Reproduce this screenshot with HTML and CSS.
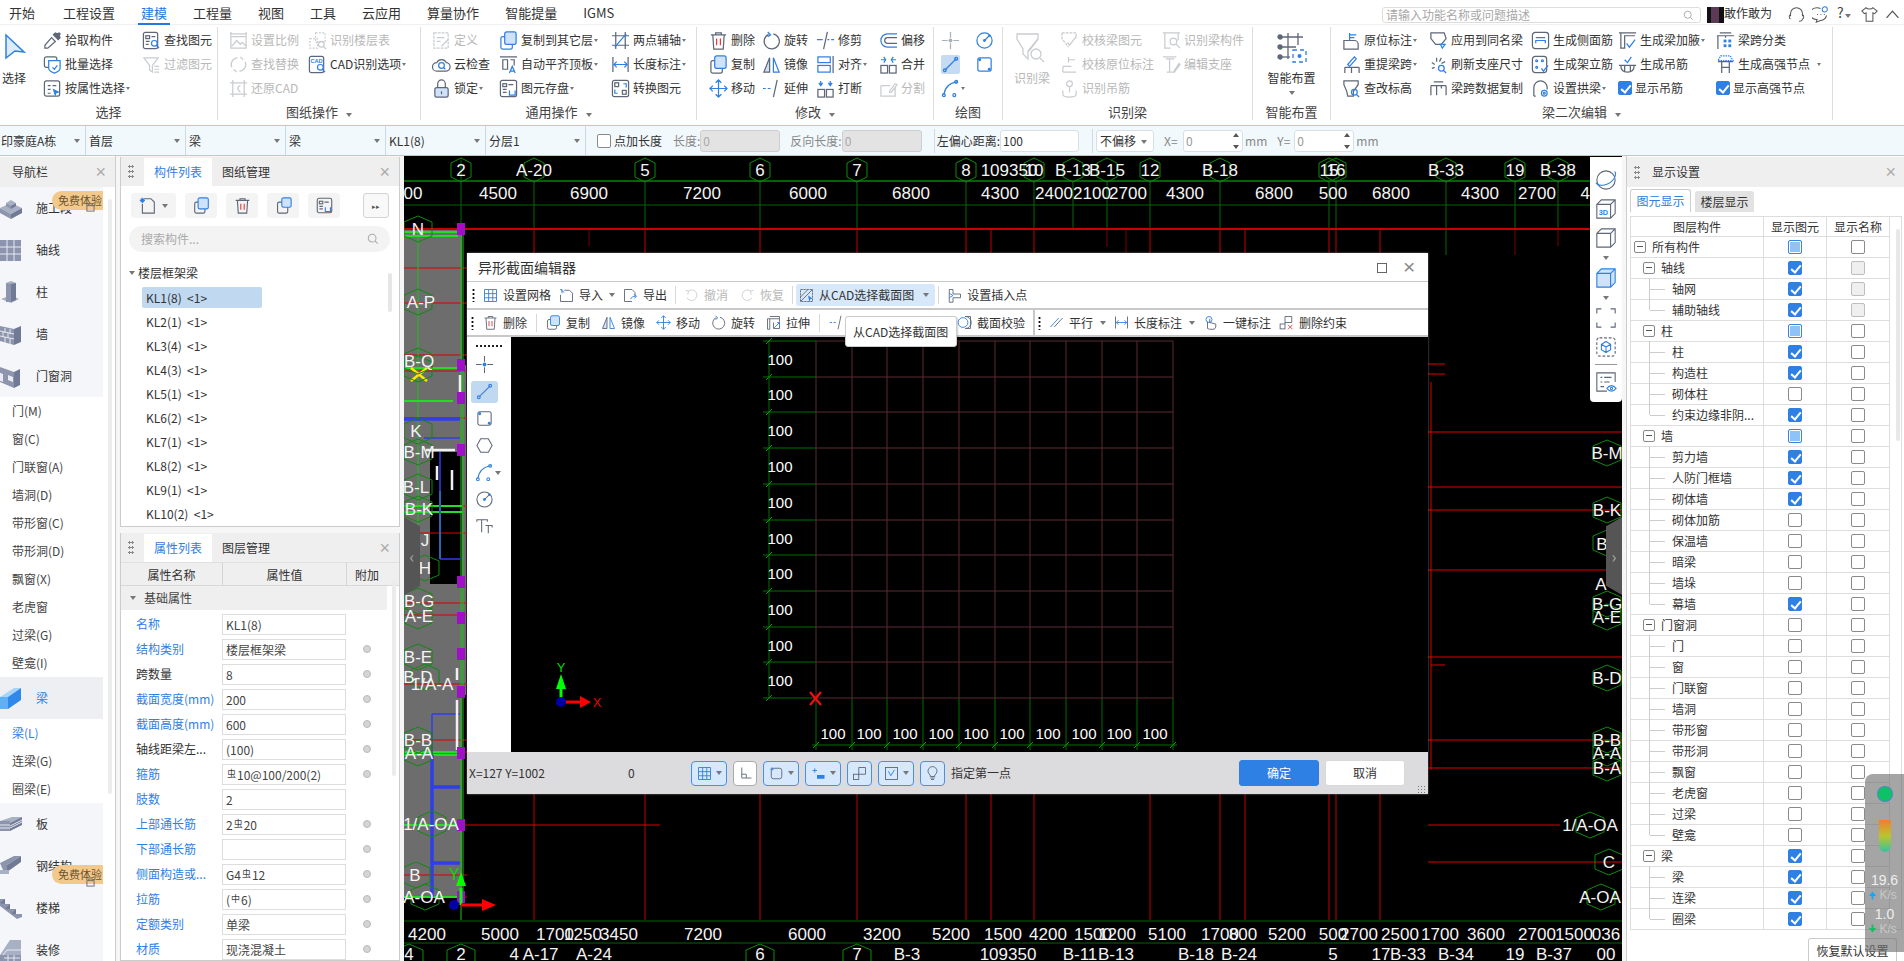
FILE: index.html
```html
<!DOCTYPE html>
<html lang="zh-CN">
<head>
<meta charset="utf-8">
<title>异形截面编辑器</title>
<link rel="stylesheet" href="styles.css">
</head>
<body>
<svg class="sprite" aria-hidden="true">
<symbol id="pick" viewBox="0 0 20 20"><path d="M9 7l4 4-8 7H2v-3z"/><path class="k" d="M11 4l2-2 2 1 2-1 1 1-1 2 1 2-2 2-5-5z"/></symbol>
<symbol id="batch" viewBox="0 0 20 20"><rect x="1.500" y="2" width="13" height="11" rx="2"/><path class="b w" d="M6 6h12v8c0 2-3 4-6 5-3-1-6-3-6-5z"/><path class="b" d="M10 13l2 2 3-4"/></symbol>
<symbol id="attr" viewBox="0 0 20 20"><rect x="1.500" y="2" width="16" height="16" rx="2"/><path d="M5 7h3M10 7h4M5 11h3M5 15h3"/><path class="fb" d="M10 10l8 4-4 1-1 4z"/></symbol>
<symbol id="find" viewBox="0 0 20 20"><rect x="1.500" y="1.500" width="15" height="17" rx="2"/><rect x="4" y="5" width="4" height="3"/><path d="M10 6h4M4 11h4M4 14h3"/><circle class="b w" cx="13" cy="13" r="3"/><path class="b" d="M15 15l3 3"/></symbol>
<symbol id="filter" viewBox="0 0 20 20"><path d="M2 3h15l-6 8v7l-3-2v-5z"/><path d="M13 12h5M13 15h5M13 18h5"/></symbol>
<symbol id="scale" viewBox="0 0 20 20"><path d="M2 1v4M18 1v4M1 3h18M2 6h16v12H2z"/><path d="M3 16l5-6 4 4 2-2 4 4"/></symbol>
<symbol id="idfl" viewBox="0 0 20 20"><path stroke-dasharray="2 1.500" d="M2 8h8v10H2zM8 2h10v10H8z"/><circle cx="14" cy="14" r="3"/><path d="M16 16l3 3"/></symbol>
<symbol id="repl" viewBox="0 0 20 20"><path d="M3 13A7 7 0 0 1 9 3M12 2l3 3M17 7a7 7 0 0 1-6 10M8 18l-3-3"/></symbol>
<symbol id="rest" viewBox="0 0 20 20"><path d="M4 1v18M16 1v18M1 4h18M1 16h18"/><path d="M12 7a4 4 0 0 0-3 3l3 4"/></symbol>
<symbol id="defi" viewBox="0 0 20 20"><path stroke-dasharray="3 1" d="M2 2h15v16H2z"/><path d="M5 7h8M5 11h4M10 16l7-7"/></symbol>
<symbol id="cloud" viewBox="0 0 20 20"><path d="M5 17h9a4.500 4.500 0 0 0 1-9 5.500 5.500 0 0 0-10 0 4.500 4.500 0 0 0 0 9z"/><circle class="b" cx="10" cy="11" r="3"/><path class="b" d="M12 13l2 2"/></symbol>
<symbol id="lock" viewBox="0 0 20 20"><path d="M6 9V5a4 4 0 0 1 8 0v4"/><rect class="t" x="3" y="9" width="14" height="10" rx="2"/><path class="k" d="M10 13v3"/></symbol>
<symbol id="cpl" viewBox="0 0 20 20"><rect class="b" x="2" y="6" width="12" height="13" rx="2"/><rect class="t2" x="6" y="1" width="12" height="13" rx="2"/></symbol>
<symbol id="atop" viewBox="0 0 20 20"><path d="M1 2h18M4 5h5v10H4z"/><path d="M12 5h4v6"/><path class="b" d="M11 19l3-7 3 7M12 17h4"/></symbol>
<symbol id="save" viewBox="0 0 20 20"><rect x="1.500" y="1.500" width="17" height="17" rx="2"/><rect x="4" y="5" width="4" height="3"/><path d="M10 6h5M4 11h4M4 14h4"/><path class="b" d="M11 12v5h6v-5"/></symbol>
<symbol id="twop" viewBox="0 0 20 20"><path d="M5 1v18M15 1v18M1 5h18M1 15h18"/><path class="b" d="M4 17L16 3"/></symbol>
<symbol id="lenm" viewBox="0 0 20 20"><path d="M2 2v16M18 2v16"/><path class="b" d="M3 10h14M6 7l-3 3 3 3M14 7l3 3-3 3"/></symbol>
<symbol id="conv" viewBox="0 0 20 20"><rect x="1.500" y="1.500" width="17" height="17" rx="2"/><rect x="4" y="4" width="4" height="4"/><rect x="12" y="12" width="4" height="4"/><path class="b" d="M16 9V5h-3M4 11v4h3"/></symbol>
<symbol id="del" viewBox="0 0 20 20"><path d="M2 4h16M7 4V2h6v2M4 4l1 15h10l1-15"/><path class="r" d="M8 8v7M12 8v7"/></symbol>
<symbol id="copy" viewBox="0 0 20 20"><rect x="2" y="6" width="12" height="13" rx="2"/><rect class="t2" x="6" y="1" width="12" height="13" rx="2"/></symbol>
<symbol id="mirr" viewBox="0 0 20 20"><path class="t" d="M8 3v15H2z"/><path class="b" d="M12 3v15h6z"/></symbol>
<symbol id="move" viewBox="0 0 20 20"><path class="b" d="M10 1v18M1 10h18M7 4l3-3 3 3M7 16l3 3 3-3M4 7l-3 3 3 3M16 7l3 3-3 3"/></symbol>
<symbol id="rota" viewBox="0 0 20 20"><path d="M12 3a8 8 0 1 1-5 .5"/><path class="b" d="M6 1l3 3-3 2"/></symbol>
<symbol id="trim" viewBox="0 0 20 20"><path d="M12 1L8 19"/><path class="b" d="M1 9h6M12 9h2M16 9h3"/></symbol>
<symbol id="exte" viewBox="0 0 20 20"><path d="M16 1l-4 18"/><path class="b" d="M1 10h3M6 10h3"/></symbol>
<symbol id="alig" viewBox="0 0 20 20"><rect class="b" x="2" y="2" width="13" height="6"/><rect class="b" x="2" y="11" width="13" height="7"/><path d="M18 1v18"/></symbol>
<symbol id="brea" viewBox="0 0 20 20"><rect x="2" y="11" width="7" height="8"/><rect x="11" y="11" width="7" height="8"/><path class="b" d="M5 2v5M3 4l2 3 2-3M15 2v5M13 4l2 3 2-3"/></symbol>
<symbol id="offs" viewBox="0 0 20 20"><path class="b" d="M19 3H9a7 7 0 0 0 0 14h10"/><path d="M19 7H9a3 3 0 0 0 0 6h10"/></symbol>
<symbol id="merg" viewBox="0 0 20 20"><rect x="2" y="11" width="7" height="8"/><rect x="11" y="11" width="7" height="8"/><path class="b" d="M2 5h5M5 2l2 3-2 3M18 5h-5M15 2l-2 3 2 3"/></symbol>
<symbol id="spli" viewBox="0 0 20 20"><path d="M2 7h10M2 7v11h15V9M11 13l6-8 2 1-6 8h-2z"/></symbol>
<symbol id="pnt" viewBox="0 0 20 20"><path d="M10 1v6M10 13v6M1 10h6M13 10h6"/><circle class="fb" cx="10" cy="10" r="2"/></symbol>
<symbol id="cir" viewBox="0 0 20 20"><circle cx="10" cy="10" r="8"/><path d="M10 10l5-5"/><circle class="fb" cx="10" cy="10" r="1.500"/><circle class="fb" cx="15" cy="5" r="1.200"/></symbol>
<symbol id="lin" viewBox="0 0 20 20"><path d="M4 16L16 4"/><circle class="b" cx="4" cy="16" r="1.500"/><circle class="b" cx="16" cy="4" r="1.500"/></symbol>
<symbol id="rec" viewBox="0 0 20 20"><rect x="3" y="3" width="14" height="14" rx="2"/><circle class="fb" cx="15" cy="15" r="1.500"/><circle class="fb" cx="5" cy="5" r="1.500"/></symbol>
<symbol id="arc" viewBox="0 0 20 20"><path d="M3 17C4 8 9 4 17 3"/><circle class="b" cx="3" cy="17" r="1.500"/><circle class="b" cx="16" cy="3" r="1.500"/><circle class="b" cx="14" cy="17" r="1.500"/></symbol>
<symbol id="hexa" viewBox="0 0 20 20"><path d="M6 3h8l4 7-4 7H6l-4-7z"/></symbol>
<symbol id="typ" viewBox="0 0 20 20"><path d="M2 5V3h11v2M7 3v13M11 9h7v2M14 9v8"/></symbol>
<symbol id="idb" viewBox="0 0 30 32"><path d="M2 3h21v5L13 20v8l-5-5v-5L2 8z"/><path d="M23 8l-9 12"/><circle cx="21" cy="23" r="5"/><path d="M25 27l4 4"/></symbol>
<symbol id="chk" viewBox="0 0 20 20"><path stroke-dasharray="3 1" d="M2 2h15v6M2 2v6l7 9"/><path d="M8 12l2 3 7-9"/></symbol>
<symbol id="chk2" viewBox="0 0 20 20"><path d="M9 2v6M9 5h7M3 18h14M3 12h9M3 12v6"/></symbol>
<symbol id="idh" viewBox="0 0 20 20"><circle cx="10" cy="5" r="3"/><path d="M10 8v6M3 12v4a7 3 0 0 0 14 0v-4"/></symbol>
<symbol id="idc" viewBox="0 0 20 20"><path d="M1 2h18M3 2v16h6M17 2v8"/><circle cx="12" cy="11" r="3.500"/><path d="M15 14l4 4"/></symbol>
<symbol id="edsup" viewBox="0 0 20 20"><path d="M1 2h14M4 4h9M8 4v14M5 18h6M12 18l6-9 1 1-6 8z"/></symbol>
<symbol id="smart" viewBox="0 0 32 32"><path d="M4 6h23M4 16h16M12 2v26M22 2v12"/><circle class="k" cx="4" cy="6" r="2"/><circle class="k" cx="4" cy="16" r="2"/><circle class="k" cx="4" cy="26" r="2"/><path d="M4 26h10"/><path class="b" stroke-dasharray="4 3" d="M17 19h13v12H17z"/><circle class="fb" cx="23.500" cy="25" r="2"/></symbol>
<symbol id="bor" viewBox="0 0 20 20"><path d="M2 10h11a4 4 0 0 1 4 4v5H2z"/><path class="b" d="M8 2v8M8 4h7M8 7h5"/></symbol>
<symbol id="brp" viewBox="0 0 20 20"><path d="M3 13h15M3 13v6M10 13v6M18 13v6"/><path class="b" d="M6 10l7-8 2 2-7 8z"/></symbol>
<symbol id="bel" viewBox="0 0 20 20"><path d="M2 2h15v4l-5 7v5H6l-1-5-3-7z"/><circle class="b" cx="13" cy="14" r="3"/><path class="b" d="M15 16l3 3"/></symbol>
<symbol id="bap" viewBox="0 0 20 20"><path d="M2 2h14l2 6-5 6H7L2 8z"/><path class="b" d="M12 14l2 4 3-4z"/></symbol>
<symbol id="bref" viewBox="0 0 20 20"><path d="M8 3v4M3 8l3 2M3 14l3-1M13 3l-2 4M17 7l-4 2"/><circle class="b" cx="13" cy="14" r="3"/><path class="b" d="M15 16l3 3"/></symbol>
<symbol id="bcop" viewBox="0 0 20 20"><path d="M5 3h10M2 7h16M2 7v10M18 7v10M8 7v10M13 7v3"/></symbol>
<symbol id="bsid" viewBox="0 0 20 20"><rect x="1.500" y="1.500" width="17" height="17" rx="3"/><path class="b" d="M5 7h10M5 13v-3h10v3"/></symbol>
<symbol id="beri" viewBox="0 0 20 20"><rect x="1.500" y="1.500" width="15" height="17" rx="3"/><circle class="b" cx="6" cy="6" r="1"/><circle class="b" cx="12" cy="6" r="1"/><circle class="b" cx="6" cy="13" r="1"/><path class="b" d="M11 14l2 3 5-6"/></symbol>
<symbol id="barc" viewBox="0 0 20 20"><path d="M3 18V9a7 7 0 0 1 14 0v2M3 18h2"/><circle class="b" cx="14" cy="15" r="3"/><circle class="b" cx="14" cy="15" r="1"/></symbol>
<symbol id="bhau" viewBox="0 0 20 20"><path d="M1 2h18M3 2v16h4V5h11"/><path class="b" d="M9 13l3 4 6-8"/></symbol>
<symbol id="bhan" viewBox="0 0 20 20"><path d="M1 11h18M3 11c0 5 3 7 7 7s7-2 7-7M7 11v6M13 11v6"/><path class="b" d="M7 5l3 3 4-6"/></symbol>
<symbol id="bcla" viewBox="0 0 20 20"><path d="M4 2h12M1 5h18M2 5v14M10 5v2"/><rect class="fb" x="8" y="9" width="3" height="3"/><rect class="fb" x="13" y="9" width="3" height="3"/><rect class="fb" x="8" y="14" width="3" height="3"/><rect class="fb" x="13" y="14" width="3" height="3"/></symbol>
<symbol id="bhs" viewBox="0 0 20 20"><path class="b" stroke-dasharray="1.500 1" d="M5 1h10l3 5H2z"/><path d="M2 7h16M6 7v12M14 7v12M6 13h8"/></symbol>
<symbol id="grid" viewBox="0 0 20 20"><path class="b" d="M2 2h16v16H2zM2 7.500h16M2 13h16M7.500 2v16M13 2v16"/></symbol>
<symbol id="impo" viewBox="0 0 20 20"><path d="M7 3h7l4 4v11H2V9"/><path class="b" d="M2 2l5 4M4 7V2H2"/></symbol>
<symbol id="expo" viewBox="0 0 20 20"><path d="M12 18H2V2h10l4 4v5"/><path class="b" d="M10 15c1-3 4-4 7-4M15 8l3 3-3 3"/></symbol>
<symbol id="undo" viewBox="0 0 20 20"><path d="M6 4a7 7 0 1 1-2 9M2 3l4 1-1 5"/></symbol>
<symbol id="redo" viewBox="0 0 20 20"><path d="M14 4a7 7 0 1 0 2 9M18 3l-4 1 1 5"/></symbol>
<symbol id="fcad" viewBox="0 0 20 20"><path stroke-dasharray="3 1" d="M2 2h16v16H2z"/><path d="M2 12L12 2M2 18L18 2"/><path class="fb" d="M12 10l6 4-3 1-1 4z"/></symbol>
<symbol id="ins" viewBox="0 0 20 20"><path d="M3 2h5v6h10v5H8v6H3z"/><path class="b" d="M3 7l5 3-5 3"/></symbol>
<symbol id="stre" viewBox="0 0 20 20"><path d="M2 5h3v14H2zM5 5h13v4M5 2h13v3"/><path d="M10 10v8h8v-8"/><path class="b" d="M11 17l7-7M15 10h3v3"/></symbol>
<symbol id="veri" viewBox="0 0 20 20"><circle class="b" cx="8" cy="10" r="6.500"/><path d="M11 2h7v16h-7a8 8 0 0 0 0-16z"/></symbol>
<symbol id="para" viewBox="0 0 20 20"><path class="b" d="M2 16L13 4"/><path d="M7 16L18 4"/></symbol>
<symbol id="onek" viewBox="0 0 20 20"><circle class="b" cx="8" cy="6" r="4"/><path d="M6 9v9l3 1h6l2-3v-4l-8-2V5"/></symbol>
<symbol id="dcon" viewBox="0 0 20 20"><rect x="1.500" y="12" width="6.500" height="6.500"/><path d="M8 12V2h9v8h-9"/><path class="r" d="M12 13l6 6M18 13l-6 6"/></symbol>
<symbol id="orth" viewBox="0 0 20 20"><path d="M5 2v14h13M5 11h6v5"/></symbol>
<symbol id="blb" viewBox="0 0 20 20"><path d="M7 14v-2a6 6 0 1 1 6 0v2zM7 16h6M8 18h4"/></symbol>
<symbol id="snap" viewBox="0 0 20 20"><rect x="3" y="3" width="14" height="14" rx="3"/><circle class="b" cx="4" cy="4" r="1.500"/></symbol>
<symbol id="sn2" viewBox="0 0 20 20"><path class="b" d="M5 3v6M2 6h6"/><rect class="fb" x="8" y="12" width="10" height="5"/></symbol>
<symbol id="sn3" viewBox="0 0 20 20"><rect x="2" y="11" width="7" height="7"/><path d="M9 11V2h9v9H9"/></symbol>
<symbol id="sn4" viewBox="0 0 20 20"><rect x="2" y="2" width="16" height="16"/><path class="b" d="M6 7l3 6 5-8"/></symbol>
<symbol id="orb" viewBox="0 0 24 24"><circle cx="12" cy="12" r="10"/><path class="b" d="M1 15c3 5 15 3 20-5 2-4 2-7 0-7"/></symbol>
<symbol id="cube" viewBox="0 0 24 24"><path d="M2 7l5-5h15v15l-5 5H2zM2 7h15v15M17 7l5-5"/></symbol>
<symbol id="cubb" viewBox="0 0 24 24"><path class="t3" d="M2 7l5-5h15v15l-5 5H2zM2 7h15v15M17 7l5-5"/></symbol>
<symbol id="dash" viewBox="0 0 24 24"><path d="M2 7V2h5M17 2h5v5M22 17v5h-5M7 22H2v-5"/></symbol>
<symbol id="dcb" viewBox="0 0 24 24"><rect x="2" y="2" width="20" height="20" rx="3" stroke-dasharray="3 2"/><path class="b" d="M12 6l5 3v6l-5 3-5-3V9zM7 9l5 3 5-3M12 12v6"/></symbol>
<symbol id="leye" viewBox="0 0 24 24"><path d="M22 12V2H2v20h11M6 7h2M10 7h8M6 12h2M10 12h6M6 17h4"/><path class="b" d="M13 19c3-4 7-4 10 0-3 4-7 4-10 0z"/><circle class="b" cx="18" cy="19" r="1.200"/></symbol>
<symbol id="grp" viewBox="0 0 20 20"><rect x="3" y="6" width="12" height="13" rx="2"/><rect class="t2" x="8" y="1" width="11" height="11" rx="2"/></symbol>
<symbol id="plus" viewBox="0 0 20 20"><path d="M6 2h8l4 4v13H4V8"/><path class="b" d="M2 2l4 4M6 2L2 6M4 1v6M1 4h6"/></symbol>
</svg>

<header class="tabs">
  <span class="tab first">开始</span><span class="tab">工程设置</span><span class="tab on">建模</span><span class="tab">工程量</span><span class="tab">视图</span><span class="tab">工具</span><span class="tab">云应用</span><span class="tab">算量协作</span><span class="tab">智能提量</span><span class="tab">IGMS</span>
  <div class="search">请输入功能名称或问题描述<svg class="sic" viewBox="0 0 14 14"><circle cx="6" cy="6" r="4.500"/><path d="M9.500 9.500l3 3"/></svg></div>
  <span class="avatar"></span><span class="user">敢作敢为</span>
  <svg class="top-ic" viewBox="0 0 20 20"><path d="M3 12V9a7 7 0 0 1 14 0v3M3 10c-2 0-2 5 0 5M17 10c2 0 2 5 0 5M17 15c0 2-2 3-4 3"/></svg>
  <svg class="top-ic" viewBox="0 0 20 20"><path d="M10 3a8 7 0 1 0-4 13l-1 3 5-2a8 7 0 0 0 7-6"/><circle cx="15" cy="4" r="3" class="bl"/><path d="M6 10h1M10 10h1M14 10h1"/></svg>
  <span class="help">?<i class="dd"></i></span>
  <svg class="top-ic" viewBox="0 0 20 20"><path d="M6 2L1 6l3 3 2-1v10h8V8l2 1 3-3-5-4c-1 2-7 2-8 0z"/></svg>
  <svg class="top-ic up" viewBox="0 0 20 20"><path d="M3 14l7-8 7 8"/></svg>
</header>

<section class="ribbon">
  <div class="group g1">
    <div class="gbody">
      <div class="big sel"><svg class="bigic" viewBox="0 0 22 27"><path d="M2 2l18 17-9-1-9 7z"/></svg><span>选择</span></div>
      <div class="ri"><svg class="ic"><use href="#pick"/></svg>拾取构件</div>
      <div class="ri"><svg class="ic"><use href="#batch"/></svg>批量选择</div>
      <div class="ri"><svg class="ic"><use href="#attr"/></svg>按属性选择<i class="dd"></i></div>
      <div class="ri"><svg class="ic"><use href="#find"/></svg>查找图元</div>
      <div class="ri off"><svg class="ic"><use href="#filter"/></svg>过滤图元</div>
    </div>
    <div class="gt">选择</div>
  </div>
  <div class="group g2">
    <div class="gbody">
      <div class="ri off"><svg class="ic"><use href="#scale"/></svg>设置比例</div>
      <div class="ri off"><svg class="ic"><use href="#repl"/></svg>查找替换</div>
      <div class="ri off"><svg class="ic"><use href="#rest"/></svg>还原CAD</div>
      <div class="ri off"><svg class="ic"><use href="#idfl"/></svg>识别楼层表</div>
      <div class="ri"><svg class="ic" viewBox="0 0 20 20"><rect x="1.500" y="1.500" width="15" height="17" rx="2"/><text class="ct" x="2.500" y="8">CAD</text><circle class="b w" cx="13" cy="13" r="3"/><path class="b" d="M15 15l3 3"/></svg>CAD识别选项<i class="dd"></i></div>
    </div>
    <div class="gt">图纸操作<i class="dd wide"></i></div>
  </div>
  <div class="group g3">
    <div class="gbody">
      <div class="ri off"><svg class="ic"><use href="#defi"/></svg>定义</div>
      <div class="ri"><svg class="ic"><use href="#cloud"/></svg>云检查</div>
      <div class="ri"><svg class="ic"><use href="#lock"/></svg>锁定<i class="dd"></i></div>
      <div class="ri"><svg class="ic"><use href="#cpl"/></svg>复制到其它层<i class="dd"></i></div>
      <div class="ri"><svg class="ic"><use href="#atop"/></svg>自动平齐顶板<i class="dd"></i></div>
      <div class="ri"><svg class="ic"><use href="#save"/></svg>图元存盘<i class="dd"></i></div>
      <div class="ri"><svg class="ic"><use href="#twop"/></svg>两点辅轴<i class="dd"></i></div>
      <div class="ri"><svg class="ic"><use href="#lenm"/></svg>长度标注<i class="dd"></i></div>
      <div class="ri"><svg class="ic"><use href="#conv"/></svg>转换图元</div>
    </div>
    <div class="gt">通用操作<i class="dd wide"></i></div>
  </div>
  <div class="group g4">
    <div class="gbody">
      <div class="ri"><svg class="ic"><use href="#del"/></svg>删除</div>
      <div class="ri"><svg class="ic"><use href="#copy"/></svg>复制</div>
      <div class="ri"><svg class="ic"><use href="#move"/></svg>移动</div>
      <div class="ri"><svg class="ic"><use href="#rota"/></svg>旋转</div>
      <div class="ri"><svg class="ic"><use href="#mirr"/></svg>镜像</div>
      <div class="ri"><svg class="ic"><use href="#exte"/></svg>延伸</div>
      <div class="ri"><svg class="ic"><use href="#trim"/></svg>修剪</div>
      <div class="ri"><svg class="ic"><use href="#alig"/></svg>对齐<i class="dd"></i></div>
      <div class="ri"><svg class="ic"><use href="#brea"/></svg>打断</div>
      <div class="ri"><svg class="ic"><use href="#offs"/></svg>偏移</div>
      <div class="ri"><svg class="ic"><use href="#merg"/></svg>合并</div>
      <div class="ri off"><svg class="ic"><use href="#spli"/></svg>分割</div>
    </div>
    <div class="gt">修改<i class="dd wide"></i></div>
  </div>
  <div class="group g5">
    <div class="gbody">
      <div class="ri off2"><svg class="ic"><use href="#pnt"/></svg></div>
      <div class="ri act"><svg class="ic"><use href="#lin"/></svg></div>
      <div class="ri"><svg class="ic"><use href="#arc"/></svg><i class="dd"></i></div>
      <div class="ri"><svg class="ic"><use href="#cir"/></svg></div>
      <div class="ri"><svg class="ic"><use href="#rec"/></svg></div>
    </div>
    <div class="gt">绘图</div>
  </div>
  <div class="group g6">
    <div class="gbody">
      <div class="big off"><svg class="bigic2"><use href="#idb"/></svg><span>识别梁</span></div>
      <div class="ri off"><svg class="ic"><use href="#chk"/></svg>校核梁图元</div>
      <div class="ri off"><svg class="ic"><use href="#chk2"/></svg>校核原位标注</div>
      <div class="ri off"><svg class="ic"><use href="#idh"/></svg>识别吊筋</div>
      <div class="ri off"><svg class="ic"><use href="#idc"/></svg>识别梁构件</div>
      <div class="ri off"><svg class="ic"><use href="#edsup"/></svg>编辑支座</div>
    </div>
    <div class="gt">识别梁</div>
  </div>
  <div class="group g7">
    <div class="gbody">
      <div class="big"><svg class="bigic2"><use href="#smart"/></svg><span>智能布置</span><i class="dd"></i></div>
    </div>
    <div class="gt">智能布置</div>
  </div>
  <div class="group g8">
    <div class="gbody">
      <div class="ri"><svg class="ic"><use href="#bor"/></svg>原位标注<i class="dd"></i></div>
      <div class="ri"><svg class="ic"><use href="#brp"/></svg>重提梁跨<i class="dd"></i></div>
      <div class="ri"><svg class="ic"><use href="#bel"/></svg>查改标高</div>
      <div class="ri"><svg class="ic"><use href="#bap"/></svg>应用到同名梁</div>
      <div class="ri"><svg class="ic"><use href="#bref"/></svg>刷新支座尺寸</div>
      <div class="ri"><svg class="ic"><use href="#bcop"/></svg>梁跨数据复制</div>
      <div class="ri"><svg class="ic"><use href="#bsid"/></svg>生成侧面筋</div>
      <div class="ri"><svg class="ic"><use href="#beri"/></svg>生成架立筋</div>
      <div class="ri"><svg class="ic"><use href="#barc"/></svg>设置拱梁<i class="dd"></i></div>
      <div class="ri"><svg class="ic"><use href="#bhau"/></svg>生成梁加腋<i class="dd"></i></div>
      <div class="ri"><svg class="ic"><use href="#bhan"/></svg>生成吊筋</div>
      <div class="ri"><span class="cb on"></span>显示吊筋</div>
      <div class="ri"><svg class="ic"><use href="#bcla"/></svg>梁跨分类</div>
      <div class="ri"><svg class="ic"><use href="#bhs"/></svg>生成高强节点<i class="dd wide"></i></div>
      <div class="ri"><span class="cb on"></span>显示高强节点</div>
    </div>
    <div class="gt">梁二次编辑<i class="dd wide"></i></div>
  </div>
  <div class="group g9"></div>
</section>

<section class="opts">
  <div class="cell c0">印豪庭A栋<i class="dd"></i></div>
  <div class="cell">首层<i class="dd"></i></div>
  <div class="cell">梁<i class="dd"></i></div>
  <div class="cell">梁<i class="dd"></i></div>
  <div class="cell">KL1(8)<i class="dd"></i></div>
  <div class="cell">分层1<i class="dd"></i></div>
  <label class="op chk"><span class="cb"></span>点加长度</label>
  <span class="op o1 dim">长度:</span><span class="inp dis">0</span>
  <span class="op o2 dim">反向长度:</span><span class="inp dis">0</span>
  <span class="vsep s1"></span>
  <span class="op">左偏心距离:</span><span class="inp w79">100</span>
  <span class="vsep s2"></span>
  <span class="inp sel-b">不偏移<i class="dd"></i></span>
  <span class="op o3 dim">X=</span><span class="inp spin dimv">0<i class="sp"></i></span><span class="op o4 dim">mm</span>
  <span class="op o5 dim">Y=</span><span class="inp spin dimv">0<i class="sp"></i></span><span class="op o4 dim">mm</span>
</section>

<main class="main">
  <nav class="nav">
    <div class="phead"><span>导航栏</span><b class="x">×</b></div>
    <div class="nav-body">
      <div class="nav-list">
        <div class="sec">
          <div class="ni"><svg class="nic" viewBox="0 0 22 24"><path class="g1f" d="M0 12l11-5 11 5-11 6z"/><path class="g2f" d="M0 12v5l11 6v-5z"/><path class="g3f" d="M22 12v5l-11 6v-5z"/><path class="g1f" d="M6 7l5-3 5 3-5 3z"/><path class="g2f" d="M6 7v3l5 3v-3z"/><path class="g3f" d="M16 7v3l-5 3v-3z"/></svg>施工段</div>
          <div class="ni"><svg class="nic" viewBox="0 0 22 24"><rect class="g2f" x="0" y="2" width="21" height="21"/><path class="wl" d="M0 9h21M0 16h21M7 2v21M14 2v21"/></svg>轴线</div>
          <div class="ni"><svg class="nic" viewBox="0 0 22 24"><path class="g1f" d="M1 19l10-4 8 4-8 4z"/><path class="g2f" d="M6 3h5v19H6z"/><path class="g3f" d="M11 3h5v17l-5 2z"/><path class="g1f" d="M6 3l5-2 5 2-5 1z"/></svg>柱</div>
          <div class="ni"><svg class="nic" viewBox="0 0 22 24"><path class="g2f" d="M0 4l14 3v16L0 19z"/><path class="g3f" d="M14 7l7-3v16l-7 3z"/><path class="wl" d="M0 9l14 3M0 14l14 3M5 6v5M10 7v5M3 10v5M8 11v5M5 15v6M10 16v6"/></svg>墙</div>
          <div class="ni"><svg class="nic" viewBox="0 0 22 24"><path class="g2f" d="M0 3l14 5v16L0 18z"/><path class="g3f" d="M14 8l6-3v16l-6 3z"/><path class="wh" d="M-2 8l5 2v8l-5-2zM8 11l5 2v5l-5-2z"/></svg>门窗洞</div>
        </div>
        <div class="si">门(M)</div><div class="si">窗(C)</div><div class="si">门联窗(A)</div><div class="si">墙洞(D)</div><div class="si">带形窗(C)</div><div class="si">带形洞(D)</div><div class="si">飘窗(X)</div><div class="si">老虎窗</div><div class="si">过梁(G)</div><div class="si">壁龛(I)</div>
        <div class="sec cur">
          <div class="ni"><svg class="nic" viewBox="0 0 22 24"><path class="bl2" d="M0 11l14-9h7L8 11z"/><path class="bl1" d="M0 11h8v12H0z"/><path class="bl3" d="M8 11l13-9v12L8 23z"/></svg>梁</div>
        </div>
        <div class="si blue">梁(L)</div><div class="si">连梁(G)</div><div class="si">圈梁(E)</div>
        <div class="sec">
          <div class="ni"><svg class="nic" viewBox="0 0 22 24"><path class="g1f" d="M0 9l12-4h10L10 11z"/><path class="g2f" d="M0 9h10v10H0z"/><path class="g3f" d="M10 11l12-6v8L10 19z"/><path class="wl" d="M0 13h10M0 16h10M10 14l12-6M10 16l12-6"/></svg>板</div>
          <div class="ni"><svg class="nic" viewBox="0 0 22 24"><path class="g2f" d="M0 9l14-7h7L7 11v5H3z"/><path class="g3f" d="M7 11l14-9v6L7 18z"/><path class="g1f" d="M0 16h9v4H0z"/></svg>钢结构</div>
          <div class="ni"><svg class="nic" viewBox="0 0 22 24"><path class="g2f" d="M0 3h5v5h5v5h6v5h6v3l-5 2L0 10z"/><path class="g3f" d="M5 3l-5 4 5 1zM10 8L5 13l5 0zM16 13l-5 5h5z"/></svg>楼梯</div>
          <div class="ni"><svg class="nic" viewBox="0 0 22 24"><path class="g1f" d="M0 17L10 2h11v15z"/><path class="g2f" d="M0 17h21v6H0z"/><path class="wl" d="M3 17l4-5h14M4 20h16M8 17v6M14 17v6"/></svg>装修</div>
        </div>
      </div>
      <div class="track"><span class="thumb"></span></div>
    </div>
    <div class="badge b1">免费体验</div>
    <svg class="lk lk1" viewBox="0 0 10 10"><rect x="1" y="3" width="8" height="6"/><path d="M3 3V1h4v2"/></svg>
    <div class="badge b2">免费体验</div>
    <svg class="lk lk2" viewBox="0 0 10 10"><rect x="1" y="3" width="8" height="6"/><path d="M3 3V1h4v2"/></svg>
  </nav>

  <div class="mid">
    <div class="panel list">
      <div class="ptabs"><span class="grip"></span><span class="ptab on">构件列表</span><span class="ptab">图纸管理</span><b class="x">×</b></div>
      <div class="ltools">
        <span class="lbtn wide"><svg class="ic"><use href="#plus"/></svg><i class="dd"></i></span>
        <span class="lbtn"><svg class="ic"><use href="#copy"/></svg></span>
        <span class="lbtn"><svg class="ic"><use href="#del"/></svg></span>
        <span class="lbtn"><svg class="ic"><use href="#grp"/></svg></span>
        <span class="lbtn"><svg class="ic"><use href="#save"/></svg></span>
        <span class="lbtn more">▸▸</span>
      </div>
      <div class="lsearch">搜索构件...<svg class="sic" viewBox="0 0 14 14"><circle cx="6" cy="6" r="4.500"/><path d="M9.500 9.500l3 3"/></svg></div>
      <div class="tree-h"><i class="dd"></i>楼层框架梁</div>
      <div class="kl"><span class="sel-row">KL1(8)  &lt;1&gt;</span></div>
      <div class="kl"><span>KL2(1)  &lt;1&gt;</span></div>
      <div class="kl"><span>KL3(4)  &lt;1&gt;</span></div>
      <div class="kl"><span>KL4(3)  &lt;1&gt;</span></div>
      <div class="kl"><span>KL5(1)  &lt;1&gt;</span></div>
      <div class="kl"><span>KL6(2)  &lt;1&gt;</span></div>
      <div class="kl"><span>KL7(1)  &lt;1&gt;</span></div>
      <div class="kl"><span>KL8(2)  &lt;1&gt;</span></div>
      <div class="kl"><span>KL9(1)  &lt;1&gt;</span></div>
      <div class="kl"><span>KL10(2)  &lt;1&gt;</span></div>
      <span class="lscroll"></span>
    </div>
    <div class="panel props">
      <div class="ptabs"><span class="grip"></span><span class="ptab on">属性列表</span><span class="ptab">图层管理</span><b class="x">×</b></div>
      <div class="phdr"><span>属性名称</span><span>属性值</span><span>附加</span></div>
      <div class="pgroup"><i class="dd"></i>基础属性</div>
      <div class="pr"><span class="k1 blue">名称</span><span class="val">KL1(8)</span><span></span></div>
      <div class="pr"><span class="k1 blue">结构类别</span><span class="val">楼层框架梁</span><i class="rd"></i></div>
      <div class="pr"><span class="k1">跨数量</span><span class="val">8</span><i class="rd"></i></div>
      <div class="pr"><span class="k1 blue">截面宽度(mm)</span><span class="val">200</span><i class="rd"></i></div>
      <div class="pr"><span class="k1 blue">截面高度(mm)</span><span class="val">600</span><i class="rd"></i></div>
      <div class="pr"><span class="k1">轴线距梁左...</span><span class="val">(100)</span><i class="rd"></i></div>
      <div class="pr"><span class="k1 blue">箍筋</span><span class="val"><sup>虫</sup>10@100/200(2)</span><i class="rd"></i></div>
      <div class="pr"><span class="k1 blue">肢数</span><span class="val">2</span><span></span></div>
      <div class="pr"><span class="k1 blue">上部通长筋</span><span class="val">2<sup>虫</sup>20</span><i class="rd"></i></div>
      <div class="pr"><span class="k1 blue">下部通长筋</span><span class="val"></span><i class="rd"></i></div>
      <div class="pr"><span class="k1 blue">侧面构造或...</span><span class="val">G4<sup>虫</sup>12</span><i class="rd"></i></div>
      <div class="pr"><span class="k1 blue">拉筋</span><span class="val">(<sup>中</sup>6)</span><i class="rd"></i></div>
      <div class="pr"><span class="k1 blue">定额类别</span><span class="val">单梁</span><i class="rd"></i></div>
      <div class="pr"><span class="k1 blue">材质</span><span class="val">现浇混凝土</span><i class="rd"></i></div>
      <span class="pscroll"></span>
    </div>
  </div>

  <div class="canvas">
    <svg class="cad" viewBox="404 156 1218 805" width="1218" height="805">
      <defs>
        <polygon id="hx" class="hx" points="0,-13 14,-7 14,7 0,13 -14,7 -14,-7"/>
        <polygon id="ht" class="hx" points="0,-12 10,-7 10,7 0,12 -10,7 -10,-7"/>
        <rect id="pc" class="pur" x="-4" y="-6" width="8" height="12"/>
      </defs>
      <rect class="gr" x="404" y="229" width="58" height="669"/>
      <rect class="gr" x="462" y="365" width="4" height="330"/>
      <rect class="blk" x="430" y="452" width="32" height="132"/>
      <path class="rd1" d="M534 229V920M645 229V920M760 229V920M857 229V920M966 229V920M991 229V920M1034 229V920M1150 229V920M1220 229V920M1245 229V920M1329 229V920M1336 229V920M1380 229V920"/>
      <path class="rd2" d="M589 229V246M1107 229V247M1126 229V255M1515 229V255M1558 229V246"/>
      <path class="gn1" d="M461 160V229M534 181V229M645 181V229M760 181V229M857 181V229M966 181V229M1034 181V229M1073 181V229M1107 181V229M1150 181V229M1220 181V229M1329 181V229M1336 181V229M1446 181V255M1515 181V229M1558 181V229"/>
      <path class="gn2" d="M404 181H1622"/>
      <path class="gn3" d="M404 205H1622M404 921H1622M404 943H1622"/>
      <path class="rl" d="M404 229H1622"/>
      <path class="rt" d="M404 268H467M404 303H467M404 355H467M404 371H467M404 418H467M404 506H467M404 533H467M404 603H467M404 615H467M404 684H467M404 740H467M404 752H467M404 825H660M404 875H467M404 897H467M1428 364H1445M1428 374H1445M1431 382V770M1428 432H1622M1428 487H1622M1428 510H1622M1428 570H1622M1428 657H1622M1428 740H1622M1428 768H1622M1428 825H1560M1428 862H1622M1431 665H1445"/>
      <path class="gb" d="M418 229V560M461 229V920M463 229V900"/>
      <path class="gt2" d="M404 232H460M404 236H458M404 368H460M404 401H453M404 506H462M404 512H462M404 752H460M404 755H460M404 825H460M404 897H460M440 491V559"/>
      <path class="bt1" d="M432 714V897M432 714H460M440 452V559M440 559H460M424 438H460"/>
      <path class="bt2" d="M432 755V897M432 787H460M432 863H460M404 419H460"/>
      <path class="wt" d="M460 375V398M426 450H455M437 466V480M452 470V490M457 668V680M457 700V750"/>
      <g class="pg"><use href="#pc" x="461" y="229"/><use href="#pc" x="461" y="365"/><use href="#pc" x="461" y="398"/><use href="#pc" x="461" y="450"/><use href="#pc" x="461" y="582"/><use href="#pc" x="461" y="618"/><use href="#pc" x="461" y="654"/><use href="#pc" x="461" y="692"/><use href="#pc" x="461" y="753"/><use href="#pc" x="461" y="825"/><use href="#pc" x="461" y="897"/></g>
      <path class="ycr" d="M411 368l16 13M427 368l-16 13"/>
      <g>
        <use href="#ht" x="461" y="170"/><use href="#ht" x="534" y="170"/><use href="#ht" x="645" y="170"/><use href="#ht" x="760" y="170"/><use href="#ht" x="857" y="170"/><use href="#ht" x="966" y="170"/><use href="#ht" x="1034" y="170"/><use href="#ht" x="1073" y="170"/><use href="#ht" x="1107" y="170"/><use href="#ht" x="1150" y="170"/><use href="#ht" x="1220" y="170"/><use href="#ht" x="1329" y="170"/><use href="#ht" x="1336" y="170"/><use href="#ht" x="1446" y="170"/><use href="#ht" x="1515" y="170"/><use href="#ht" x="1558" y="170"/>
        <use href="#hx" x="418" y="229"/><use href="#hx" x="418" y="302"/><use href="#hx" x="418" y="361"/><use href="#hx" x="418" y="369"/><use href="#hx" x="418" y="431"/><use href="#hx" x="418" y="452"/><use href="#hx" x="418" y="487"/><use href="#hx" x="418" y="509"/><use href="#hx" x="425" y="568"/><use href="#hx" x="418" y="601"/><use href="#hx" x="418" y="616"/><use href="#hx" x="418" y="657"/><use href="#hx" x="425" y="677"/><use href="#hx" x="418" y="740"/><use href="#hx" x="418" y="753"/><use href="#hx" x="432" y="824"/><use href="#hx" x="416" y="875"/><use href="#hx" x="425" y="897"/>
        <use href="#hx" x="1607" y="453"/><use href="#hx" x="1607" y="510"/><use href="#hx" x="1607" y="543"/><use href="#hx" x="1607" y="604"/><use href="#hx" x="1607" y="617"/><use href="#hx" x="1607" y="678"/><use href="#hx" x="1607" y="740"/><use href="#hx" x="1607" y="753"/><use href="#hx" x="1607" y="768"/><use href="#hx" x="1590" y="825"/><use href="#hx" x="1609" y="862"/><use href="#hx" x="1601" y="897"/>
        <use href="#hx" x="409" y="957"/><use href="#hx" x="461" y="957"/><use href="#hx" x="760" y="957"/><use href="#hx" x="857" y="957"/>
      </g>
      <g class="ct1">
        <text x="461" y="176">2</text><text x="534" y="176">A-20</text><text x="645" y="176">5</text><text x="760" y="176">6</text><text x="857" y="176">7</text><text x="966" y="176">8</text><text x="1009" y="176">109350</text><text x="1034" y="176">10</text><text x="1073" y="176">B-13</text><text x="1107" y="176">B-15</text><text x="1150" y="176">12</text><text x="1220" y="176">B-18</text><text x="1329" y="176">15</text><text x="1336" y="176">16</text><text x="1446" y="176">B-33</text><text x="1515" y="176">19</text><text x="1558" y="176">B-38</text>
        <text x="413" y="199">00</text><text x="498" y="199">4500</text><text x="589" y="199">6900</text><text x="702" y="199">7200</text><text x="808" y="199">6000</text><text x="911" y="199">6800</text><text x="1000" y="199">4300</text><text x="1054" y="199">2400</text><text x="1092" y="199">2100</text><text x="1128" y="199">2700</text><text x="1185" y="199">4300</text><text x="1274" y="199">6800</text><text x="1333" y="199">500</text><text x="1391" y="199">6800</text><text x="1480" y="199">4300</text><text x="1537" y="199">2700</text><text x="1590" y="199">45</text>
        <text x="418" y="235">N</text><text x="421" y="308">A-P</text><text x="419" y="367">B-Q</text><text x="416" y="437">K</text><text x="419" y="458">B-M</text><text x="416" y="493">B-L</text><text x="419" y="515">B-K</text><text x="425" y="546">J</text><text x="425" y="574">H</text><text x="419" y="607">B-G</text><text x="419" y="622">A-E</text><text x="418" y="663">B-E</text><text x="418" y="683">B-D</text><text x="432" y="690">1/A-A</text><text x="418" y="746">B-B</text><text x="419" y="759">A-A</text><text x="431" y="830">1/A-OA</text><text x="415" y="881">B</text><text x="424" y="903">A-OA</text>
        <text x="1607" y="459">B-M</text><text x="1607" y="516">B-K</text><text x="1602" y="550">B</text><text x="1601" y="590">A</text><text x="1607" y="610">B-G</text><text x="1607" y="623">A-E</text><text x="1607" y="684">B-D</text><text x="1607" y="746">B-B</text><text x="1607" y="759">A-A</text><text x="1607" y="774">B-A</text><text x="1590" y="831">1/A-OA</text><text x="1609" y="868">C</text><text x="1600" y="903">A-OA</text>
        <text x="427" y="940">4200</text><text x="500" y="940">5000</text><text x="555" y="940">1700</text><text x="583" y="940">1250</text><text x="619" y="940">3450</text><text x="703" y="940">7200</text><text x="807" y="940">6000</text><text x="882" y="940">3200</text><text x="951" y="940">5200</text><text x="1003" y="940">1500</text><text x="1048" y="940">4200</text><text x="1093" y="940">1500</text><text x="1117" y="940">1200</text><text x="1167" y="940">5100</text><text x="1220" y="940">1700</text><text x="1243" y="940">800</text><text x="1287" y="940">5200</text><text x="1333" y="940">500</text><text x="1359" y="940">2700</text><text x="1400" y="940">2500</text><text x="1440" y="940">1700</text><text x="1486" y="940">3600</text><text x="1537" y="940">2700</text><text x="1574" y="940">1500</text><text x="1606" y="940">036</text>
        <text x="409" y="960">4</text><text x="461" y="960">2</text><text x="534" y="960">4 A-17</text><text x="594" y="960">A-24</text><text x="760" y="960">6</text><text x="857" y="960">7</text><text x="907" y="960">B-3</text><text x="1008" y="960">109350</text><text x="1080" y="960">B-11</text><text x="1116" y="960">B-13</text><text x="1196" y="960">B-18</text><text x="1239" y="960">B-24</text><text x="1333" y="960">5</text><text x="1381" y="960">17</text><text x="1408" y="960">B-33</text><text x="1456" y="960">B-34</text><text x="1515" y="960">19</text><text x="1554" y="960">B-37</text><text x="1606" y="960">00</text>
      </g>
      <path class="ax-g" d="M461 905V888"/><path class="ax-gf" d="M461 872l-5 14h10z"/><path class="ax-r" d="M461 905h22"/><path class="ax-rf" d="M482 899l14 6-14 6z"/><circle class="ax-b" cx="454" cy="905" r="5"/><text class="ygt" x="454" y="880">Y</text>
    </svg>

    <div class="coll left"><span>‹</span></div>
    <div class="coll right"><span>›</span></div>

    <div class="tstrip">
      <svg class="tic"><use href="#orb"/></svg>
      <svg class="tic" viewBox="0 0 24 24"><path d="M2 7l5-5h15v15l-5 5H2zM2 7h15v15M17 7l5-5"/><text class="c3" x="4" y="18">3D</text></svg>
      <svg class="tic"><use href="#cube"/></svg>
      <i class="dd"></i>
      <svg class="tic"><use href="#cubb"/></svg>
      <i class="dd"></i>
      <svg class="tic"><use href="#dash"/></svg>
      <svg class="tic"><use href="#dcb"/></svg>
      <span class="hsep"></span>
      <svg class="tic"><use href="#leye"/></svg>
    </div>

    <section class="dialog">
      <div class="dtitle"><span>异形截面编辑器</span><span class="dmax"></span><span class="dclose">×</span></div>
      <div class="dbar">
        <span class="dots"></span>
        <span class="dt"><svg class="ds"><use href="#grid"/></svg>设置网格</span>
        <span class="dt"><svg class="ds"><use href="#impo"/></svg>导入<i class="dd"></i></span>
        <span class="dt"><svg class="ds"><use href="#expo"/></svg>导出</span>
        <span class="dsep"></span>
        <span class="dt off"><svg class="ds"><use href="#undo"/></svg>撤消</span>
        <span class="dt off m4"><svg class="ds"><use href="#redo"/></svg>恢复</span>
        <span class="dsep"></span>
        <span class="dt hl"><svg class="ds"><use href="#fcad"/></svg>从CAD选择截面图<i class="dd"></i></span>
        <span class="dsep"></span>
        <span class="dt"><svg class="ds"><use href="#ins"/></svg>设置插入点</span>
      </div>
      <div class="dbar dbar2">
        <div class="dleft">
          <span class="dots"></span>
          <span class="dt"><svg class="ds"><use href="#del"/></svg>删除</span>
          <span class="dsep"></span>
          <span class="dt"><svg class="ds"><use href="#copy"/></svg>复制</span>
          <span class="dt m2"><svg class="ds"><use href="#mirr"/></svg>镜像</span>
          <span class="dt m2"><svg class="ds"><use href="#move"/></svg>移动</span>
          <span class="dt m2"><svg class="ds"><use href="#rota"/></svg>旋转</span>
          <span class="dt m2"><svg class="ds"><use href="#stre"/></svg>拉伸</span>
          <span class="dsep"></span>
          <span class="dt tight"><svg class="ds"><use href="#exte"/></svg></span>
          <span class="dt last"><svg class="ds"><use href="#veri"/></svg>截面校验</span>
        </div>
        <div class="dright">
          <span class="dots"></span>
          <span class="dt"><svg class="ds"><use href="#para"/></svg>平行<i class="dd"></i></span>
          <span class="dt"><svg class="ds"><use href="#lenm"/></svg>长度标注<i class="dd"></i></span>
          <span class="dt"><svg class="ds"><use href="#onek"/></svg>一键标注</span>
          <span class="dt"><svg class="ds"><use href="#dcon"/></svg>删除约束</span>
        </div>
      </div>
      <div class="dwork">
        <div class="dtools">
          <span class="dotline"></span>
          <svg class="ds2"><use href="#pnt"/></svg>
          <span class="dact"><svg class="ds3"><use href="#lin"/></svg></span>
          <svg class="ds2"><use href="#rec"/></svg>
          <svg class="ds2"><use href="#hexa"/></svg>
          <span class="darc"><svg class="ds2"><use href="#arc"/></svg><i class="dd"></i></span>
          <svg class="ds2"><use href="#cir"/></svg>
          <svg class="ds2"><use href="#typ"/></svg>
        </div>
        <svg class="dcanvas" viewBox="511 337 917 415" width="917" height="415">
          <path class="dg1" d="M816 341H1173M816 377H1173M816 412H1173M816 448H1173M816 484H1173M816 520H1173M816 555H1173M816 591H1173M816 627H1173M816 662H1173M816 698H1173M816 341V698M852 341V698M887 341V698M923 341V698M959 341V698M995 341V698M1030 341V698M1066 341V698M1102 341V698M1137 341V698M1173 341V698"/>
          <path class="dg2" d="M769 341V698M763 341H816M763 377H816M763 412H816M763 448H816M763 484H816M763 520H816M763 555H816M763 591H816M763 627H816M763 662H816M763 698H816M816 698V750M852 698V750M887 698V750M923 698V750M959 698V750M995 698V750M1030 698V750M1066 698V750M1102 698V750M1137 698V750M1173 698V750M812 745H1177"/>
          <path class="dg3" d="M766 344l6-6M766 380l6-6M766 415l6-6M766 451l6-6M766 487l6-6M766 523l6-6M766 558l6-6M766 594l6-6M766 630l6-6M766 665l6-6M766 701l6-6M813 748l6-6M849 748l6-6M884 748l6-6M920 748l6-6M956 748l6-6M992 748l6-6M1027 748l6-6M1063 748l6-6M1099 748l6-6M1134 748l6-6M1170 748l6-6"/>
          <g class="dn">
            <text x="780" y="365">100</text><text x="780" y="400">100</text><text x="780" y="436">100</text><text x="780" y="472">100</text><text x="780" y="508">100</text><text x="780" y="544">100</text><text x="780" y="579">100</text><text x="780" y="615">100</text><text x="780" y="651">100</text><text x="780" y="686">100</text>
            <text x="833" y="739">100</text><text x="869" y="739">100</text><text x="905" y="739">100</text><text x="941" y="739">100</text><text x="976" y="739">100</text><text x="1012" y="739">100</text><text x="1048" y="739">100</text><text x="1084" y="739">100</text><text x="1119" y="739">100</text><text x="1155" y="739">100</text>
          </g>
          <path class="xr" d="M810 692l11 13M821 692l-11 13"/>
          <path class="ag" d="M561 703V688"/><path class="agf" d="M561 674l-5 15h10z"/><path class="ar" d="M561 702h20"/><path class="arf" d="M580 696l11 6-11 6z"/><ellipse class="ab" cx="561" cy="702" rx="5" ry="5"/>
          <text class="yl" x="561" y="672">Y</text><text class="xl" x="597" y="707">X</text>
        </svg>
      </div>
      <div class="dstatus">
        <span class="xy">X=127 Y=1002</span><span class="zero">0</span>
        <span class="sb wd"><svg class="ds"><use href="#grid"/></svg><i class="dd"></i></span>
        <span class="sb nb"><svg class="ds"><use href="#orth"/></svg></span>
        <span class="sb wd on"><svg class="ds"><use href="#snap"/></svg><i class="dd"></i></span>
        <span class="sb wd on"><svg class="ds"><use href="#sn2"/></svg><i class="dd"></i></span>
        <span class="sb on"><svg class="ds"><use href="#sn3"/></svg></span>
        <span class="sb wd on"><svg class="ds"><use href="#sn4"/></svg><i class="dd"></i></span>
        <span class="sb on"><svg class="ds"><use href="#blb"/></svg></span>
        <span class="hint">指定第一点</span>
        <span class="btn pri">确定</span><span class="btn">取消</span>
        <span class="rsz"></span>
      </div>
      <div class="tooltip">从CAD选择截面图</div>
    </section>
  </div>

  <aside class="rpanel">
    <div class="phead rh"><span class="grip"></span><span>显示设置</span><b class="x">×</b></div>
    <div class="rtabs"><span class="rt-a">图元显示</span><span class="rt-b">楼层显示</span></div>
    <div class="rtable">
      <div class="tr th"><span>图层构件</span><span>显示图元</span><span>显示名称</span></div>
      <div class="tr lv0"><span class="n"><i class="mn"></i>所有构件</span><span class="c"><i class="cb part"></i></span><span class="c"><i class="cb"></i></span></div>
      <div class="tr lv1"><span class="n"><i class="mn"></i>轴线</span><span class="c"><i class="cb on"></i></span><span class="c"><i class="cb dis"></i></span></div>
      <div class="tr lv2"><span class="n">轴网</span><span class="c"><i class="cb on"></i></span><span class="c"><i class="cb dis"></i></span></div>
      <div class="tr lv2 end"><span class="n">辅助轴线</span><span class="c"><i class="cb on"></i></span><span class="c"><i class="cb dis"></i></span></div>
      <div class="tr lv1"><span class="n"><i class="mn"></i>柱</span><span class="c"><i class="cb part"></i></span><span class="c"><i class="cb"></i></span></div>
      <div class="tr lv2"><span class="n">柱</span><span class="c"><i class="cb on"></i></span><span class="c"><i class="cb"></i></span></div>
      <div class="tr lv2"><span class="n">构造柱</span><span class="c"><i class="cb on"></i></span><span class="c"><i class="cb"></i></span></div>
      <div class="tr lv2"><span class="n">砌体柱</span><span class="c"><i class="cb"></i></span><span class="c"><i class="cb"></i></span></div>
      <div class="tr lv2 end"><span class="n">约束边缘非阴...</span><span class="c"><i class="cb on"></i></span><span class="c"><i class="cb"></i></span></div>
      <div class="tr lv1"><span class="n"><i class="mn"></i>墙</span><span class="c"><i class="cb part"></i></span><span class="c"><i class="cb"></i></span></div>
      <div class="tr lv2"><span class="n">剪力墙</span><span class="c"><i class="cb on"></i></span><span class="c"><i class="cb"></i></span></div>
      <div class="tr lv2"><span class="n">人防门框墙</span><span class="c"><i class="cb on"></i></span><span class="c"><i class="cb"></i></span></div>
      <div class="tr lv2"><span class="n">砌体墙</span><span class="c"><i class="cb on"></i></span><span class="c"><i class="cb"></i></span></div>
      <div class="tr lv2"><span class="n">砌体加筋</span><span class="c"><i class="cb"></i></span><span class="c"><i class="cb"></i></span></div>
      <div class="tr lv2"><span class="n">保温墙</span><span class="c"><i class="cb"></i></span><span class="c"><i class="cb"></i></span></div>
      <div class="tr lv2"><span class="n">暗梁</span><span class="c"><i class="cb"></i></span><span class="c"><i class="cb"></i></span></div>
      <div class="tr lv2"><span class="n">墙垛</span><span class="c"><i class="cb"></i></span><span class="c"><i class="cb"></i></span></div>
      <div class="tr lv2 end"><span class="n">幕墙</span><span class="c"><i class="cb on"></i></span><span class="c"><i class="cb"></i></span></div>
      <div class="tr lv1"><span class="n"><i class="mn"></i>门窗洞</span><span class="c"><i class="cb"></i></span><span class="c"><i class="cb"></i></span></div>
      <div class="tr lv2"><span class="n">门</span><span class="c"><i class="cb"></i></span><span class="c"><i class="cb"></i></span></div>
      <div class="tr lv2"><span class="n">窗</span><span class="c"><i class="cb"></i></span><span class="c"><i class="cb"></i></span></div>
      <div class="tr lv2"><span class="n">门联窗</span><span class="c"><i class="cb"></i></span><span class="c"><i class="cb"></i></span></div>
      <div class="tr lv2"><span class="n">墙洞</span><span class="c"><i class="cb"></i></span><span class="c"><i class="cb"></i></span></div>
      <div class="tr lv2"><span class="n">带形窗</span><span class="c"><i class="cb"></i></span><span class="c"><i class="cb"></i></span></div>
      <div class="tr lv2"><span class="n">带形洞</span><span class="c"><i class="cb"></i></span><span class="c"><i class="cb"></i></span></div>
      <div class="tr lv2"><span class="n">飘窗</span><span class="c"><i class="cb"></i></span><span class="c"><i class="cb"></i></span></div>
      <div class="tr lv2"><span class="n">老虎窗</span><span class="c"><i class="cb"></i></span><span class="c"><i class="cb"></i></span></div>
      <div class="tr lv2"><span class="n">过梁</span><span class="c"><i class="cb"></i></span><span class="c"><i class="cb"></i></span></div>
      <div class="tr lv2 end"><span class="n">壁龛</span><span class="c"><i class="cb"></i></span><span class="c"><i class="cb"></i></span></div>
      <div class="tr lv1"><span class="n"><i class="mn"></i>梁</span><span class="c"><i class="cb on"></i></span><span class="c"><i class="cb"></i></span></div>
      <div class="tr lv2"><span class="n">梁</span><span class="c"><i class="cb on"></i></span><span class="c"><i class="cb"></i></span></div>
      <div class="tr lv2"><span class="n">连梁</span><span class="c"><i class="cb on"></i></span><span class="c"><i class="cb"></i></span></div>
      <div class="tr lv2 end"><span class="n">圈梁</span><span class="c"><i class="cb on"></i></span><span class="c"><i class="cb"></i></span></div>
      <span class="rscroll"></span>
    </div>
    <div class="rfoot"><span class="rbtn">恢复默认设置</span></div>
    <div class="speed">
      <i class="dot"></i>
      <i class="pill"></i>
      <span class="sv">19.6</span>
      <span class="su"><svg class="ar-u" viewBox="0 0 10 10"><path d="M5 1l4 5H6v4H4V6H1z"/></svg>K/s</span>
      <span class="sv sv2">1.0</span>
      <span class="su"><svg class="ar-d" viewBox="0 0 10 10"><path d="M5 9L1 4h3V0h2v4h3z"/></svg>K/s</span>
    </div>
  </aside>
</main>
</body>
</html>
```

FILE: styles.css
```css
*{box-sizing:border-box}
html,body{margin:0;padding:0}
body{width:1904px;height:961px;overflow:hidden;background:#fff;color:#333;font:12px/16px "Noto Sans CJK SC","Liberation Sans",sans-serif;--ink:#5d6777;--acc:#2f80e4;--tint:#cfe2f8;--red:#e23b3b}
.sprite{position:absolute;width:0;height:0}
i{font-style:normal}
.dd{display:inline-block;width:0;height:0;border:3px solid transparent;border-top:4px solid #777;border-bottom:0;margin-left:1px}
.dd.wide{margin-left:8px}
.ic{width:19px;height:19px;flex:none;fill:none;stroke:var(--ink);stroke-width:1.3}
.b{stroke:var(--acc)}
.w{fill:#fff}
.k{fill:var(--ink);stroke:var(--ink)}
.t{fill:var(--tint)}
.t2{fill:var(--tint);stroke:var(--acc)}
.t3{fill:var(--tint);stroke:var(--acc)}
.fb{fill:var(--acc);stroke:none}
.r{stroke:var(--red)}
.ct{font:700 6px "Liberation Sans",sans-serif;fill:var(--acc);stroke:none}
.c3{font:700 8px "Liberation Sans",sans-serif;fill:var(--acc);stroke:none}
.off{--ink:#c9ccd0;--acc:#c9ccd0;--tint:#f0f0f0;--red:#c9ccd0;color:#b8b8b8}

/* top tabs */
.tabs{display:flex;align-items:center;height:25px;font-size:13px;line-height:25px;border-bottom:1px solid #f0f0f0;padding-left:9px}
.tab{margin-right:26px;position:relative;white-space:nowrap}
.tab.first{margin-right:28px}
.tab.on{color:#1f7ae0}
.tab.on::after{content:"";position:absolute;left:-3px;right:-3px;bottom:0;height:2px;background:#1f7ae0}
.search{position:absolute;left:1382px;top:7px;width:319px;height:16px;border:1px solid #ddd;border-radius:3px;font-size:12px;line-height:14px;color:#a8a8a8;padding-left:3px;white-space:nowrap}
.sic{position:absolute;right:6px;top:2px;width:11px;height:11px;fill:none;stroke:#aaa;stroke-width:1.200}
.avatar{position:absolute;left:1707px;top:7px;width:17px;height:16px;background:linear-gradient(90deg,#111 0 25%,#5a3a55 25% 70%,#111 70%)}
.user{position:absolute;left:1724px;top:0;font-size:12px;color:#333}
.top-ic{position:absolute;top:6px;width:17px;height:17px;fill:none;stroke:#555;stroke-width:1.200;left:1788px}
.top-ic:nth-of-type(2){left:1812px}
.top-ic .bl{stroke:#2f80e4;fill:#fff}
.top-ic:nth-of-type(3){left:1861px}
.top-ic.up{left:1884px;stroke-width:1.500}
.help{position:absolute;left:1837px;top:0;font-size:14px;color:#444}

/* ribbon */
.ribbon{display:flex;height:100px;padding:2px 0 5px}
.group{display:flex;flex-direction:column;border-right:1px solid #ddd;flex:none}
.gbody{flex:1;display:grid;grid-template-rows:repeat(3,24px);grid-auto-flow:column;padding-top:1px;align-content:start}
.gt{height:24px;text-align:center;font-size:13px;line-height:24px;color:#444;white-space:nowrap}
.ri{display:flex;align-items:center;gap:3px;height:24px;white-space:nowrap;font-size:12px}
.ri .dd{border-width:3px 2.500px 0;margin-left:-2px}
.ri .dd.wide{margin-left:4px}
.big{grid-row:1/4;display:flex;flex-direction:column;align-items:center;font-size:12px;white-space:nowrap}
.bigic{width:22px;height:27px;margin-top:5px;fill:#dcecfb;stroke:#2f80e4;stroke-width:1.500}
.bigic2{width:32px;height:32px;margin-top:3px;fill:none;stroke:var(--ink);stroke-width:1.300}
.big span{margin-top:7px}
.sel span{margin-top:10px}
.g1{width:218px}.g1 .gbody{grid-template-columns:41px 99px 1fr;padding-left:2px}
.g1 .big{align-items:flex-start;width:26px}.g1 .bigic{margin-left:2px}
.g2{width:203px}.g2 .gbody{grid-template-columns:79px 1fr;padding-left:11px}
.g3{width:276px}.g3 .gbody{grid-template-columns:67px 112px 1fr;padding-left:11px}
.g4{width:237px}.g4 .gbody{grid-template-columns:53px 54px 63px 1fr;padding-left:12px}
.g5{width:69px}.g5 .gbody{grid-template-columns:34px 1fr;padding-left:7px}
.g5 .ic{stroke:var(--acc)}
.g5 .act .ic{background:#c4dbf3;border-radius:2px}
.off2{--ink:#aab0b8;--acc:#aab0b8}
.g5 .off2 .ic{stroke:#aab0b8}
.g6{width:250px}.g6 .gbody{grid-template-columns:46px 102px 1fr;padding-left:11px}
.g6 .big{align-items:flex-start}
.g7{width:78px}.g7 .gbody{grid-template-columns:1fr}
.g7 .big span{margin-top:7px}
.g7 .big .dd{margin-top:5px}
.g8{width:502px}.g8 .gbody{grid-template-columns:87px 102px 87px 98px 1fr;padding-left:11px}
.g9{flex:1;border:0}
.cb{display:inline-block;flex:none;width:14px;height:14px;border:1px solid #8a8a8a;border-radius:2px;background:#fff;position:relative}
.cb.on{background:#2f80e4;border-color:#2f80e4}
.cb.on::after{content:"";position:absolute;left:4px;top:1px;width:4px;height:8px;border:solid #fff;border-width:0 2px 2px 0;transform:rotate(40deg)}
.cb.part{border-color:#3a86e0;box-shadow:inset 0 0 0 1px #fff;background:#8fc2f7}
.cb.dis{background:#efefef;border-color:#bdbdbd}

/* option bar */
.opts{display:flex;align-items:center;height:31px;background:#f2f9fd;border-top:1px solid #a7cdf0;border-bottom:1px solid #a7cdf0;white-space:nowrap}
.cell{width:100px;height:100%;padding-left:3px;display:flex;align-items:center;justify-content:space-between;padding-right:5px;border-right:1px solid #c9d9e6;flex:none}
.c0{width:86px;padding-left:1px}
.chk{margin-left:11px;display:flex;align-items:center;gap:3px}
.dim{color:#888}
.op{flex:none}
.o1{margin-left:11px}
.o2{margin-left:10px}
.inp{height:22px;width:80px;flex:none;border:1px solid #d8dfe6;border-radius:3px;background:#fff;padding-left:2px;line-height:20px;position:relative}
.inp.w79{width:79px}
.inp.dis{background:#e3e3e3;border-color:#cfcfcf;color:#aaa}
.s1{margin:0 2px 0 12px}
.s2{margin:0 3px 0 13px}
.vsep{width:1px;height:24px;background:#cfdbe6;flex:none}
.sel-b{width:58px;padding-left:3px}
.sel-b .dd{position:absolute;right:6px;top:9px}
.o3{margin-left:10px;width:19px}
.spin{width:60px}
.dimv{color:#999}
.sp{position:absolute;right:4px;top:3px;width:5px;height:14px}
.sp::before,.sp::after{content:"";position:absolute;left:0;border:3px solid transparent}
.sp::before{top:-1px;border-bottom:4px solid #555;border-top:0}
.sp::after{bottom:-1px;border-top:4px solid #555;border-bottom:0}
.o4{margin-left:2px}
.o5{margin-left:10px;width:17px}

/* main */
.main{display:flex;height:805px;position:relative;background:#f6f6f6}
.nav{width:116px;flex:none;border-right:1px solid #ccc;background:#fff;position:relative;padding-top:1px}
.phead{height:30px;background:#efefef;display:flex;align-items:center;padding-left:12px;font-size:12px;justify-content:space-between;padding-right:9px}
.x{font:400 18px/18px "Liberation Sans",sans-serif;color:#aaa}
.nav-body{display:flex}
.nav-list{width:103px}
.sec{background:#f5f6f9}
.sec.cur{background:#eeeff3;color:#2f80e4}
.ni{height:42px;display:flex;align-items:center;gap:14px;white-space:nowrap}
.nic{width:22px;height:24px;flex:none;overflow:visible}
.g1f{fill:#a8b0c4}.g2f{fill:#8c95ad}.g3f{fill:#707a94}
.wl{stroke:#e6e9f0;stroke-width:1;fill:none}
.wh{fill:#e9ebf2}
.bl1{fill:#5fb0f5}.bl2{fill:#a6d4fb}.bl3{fill:#2f88ea}
.si{height:28px;line-height:28px;padding-left:12px;white-space:nowrap;color:#444}
.si.blue,.blue{color:#2f80e4}
.track{width:4px;margin:12px 0 0 5px;height:595px;background:#ececec;border-radius:2px}
.badge{position:absolute;left:52px;width:51px;height:19px;background:#f2c98b;border-radius:10px 0 0 10px;font-size:11px;line-height:19px;padding-left:6px;color:#6b5330;white-space:nowrap;overflow:hidden}
.b1{top:35px}.b2{top:709px}
.lk{position:absolute;left:86px;width:9px;height:9px;fill:none;stroke:#666}
.lk1{top:47px}.lk2{top:722px}
.mid{width:280px;margin:0 4px;flex:none;display:flex;flex-direction:column;padding-top:1px;gap:6px}
.panel{border:1px solid #ccc;background:#fff;position:relative;border-top:0}
.list{height:370px}
.props{flex:1;overflow:hidden}
.ptabs{height:29px;background:#efefef;display:flex;align-items:flex-end;padding-left:23px;padding-right:8px;position:relative}
.grip{position:absolute;left:7px;top:7px;width:6px;height:15px;background:radial-gradient(circle,#888 1.200px,transparent 1.300px) 0 0/3px 5px}
.ptab{height:28px;width:68px;text-align:center;line-height:27px;font-size:12px;white-space:nowrap}
.ptab.on{background:#fff;color:#2f80e4}
.ptab+.ptab{width:78px;padding-left:10px;text-align:left}
.ptabs .x{position:absolute;right:9px;top:6px}
.ltools{display:flex;gap:9px;padding:7px 0 0 10px;height:32px}
.lbtn{width:32px;height:25px;background:#f4f4f4;border-radius:3px;display:flex;align-items:center;justify-content:center;flex:none}
.lbtn .ic{width:17px;height:17px}
.lbtn.wide{width:45px;gap:5px}
.lbtn.more{width:26px;margin-left:14px;border:1px solid #d4d4d4;font-size:7px;color:#555;background:#f8f8f8}
.lsearch{margin:8px 9px 0 8px;height:26px;background:#f3f3f3;border-radius:13px;line-height:26px;padding-left:12px;color:#aaa;position:relative}
.lsearch .sic{right:11px;top:7px;width:12px;height:12px}
.tree-h{margin-top:9px;padding-left:7px;height:24px;line-height:24px;display:flex;align-items:center;gap:3px}
.kl{height:24px;padding-left:21px;display:flex;align-items:center;white-space:pre}
.kl span{display:block;height:21px;line-height:21px;padding-left:4px;width:120px}
.sel-row{background:#c0d8f0;border-radius:2px}
.lscroll{position:absolute;right:7px;top:116px;width:4px;height:39px;background:#e6e6e6;border-radius:2px}
.phdr{display:grid;grid-template-columns:101px 124px 41px;height:24px;margin-top:0;background:#efefef;border-bottom:1px solid #d8d8d8;border-top:1px solid #e0e0e0;text-align:center;line-height:23px}
.phdr span+span{border-left:1px solid #d4d4d4}
.pgroup{width:266px;height:24px;background:#efefef;line-height:24px;padding-left:8px;display:flex;align-items:center;gap:8px;color:#444}
.pr{display:grid;grid-template-columns:101px 124px 41px;height:25px;align-items:center;padding-top:3px}
.k1{padding-left:15px;white-space:nowrap;color:#333;font-size:12px}
.k1.blue{color:#2f80e4}
.val{height:21px;border:1px solid #ddd;line-height:19px;padding-left:3px;white-space:nowrap;color:#444}
.val sup{font-size:9px;line-height:0;vertical-align:3px;margin:0 1px}
.rd{width:8px;height:8px;border-radius:50%;background:#d4d4d4;border:1px solid #bbb;justify-self:center}
.pscroll{position:absolute;right:3px;top:47px;width:4px;height:196px;background:#ebebeb;border-radius:2px}

/* canvas */
.canvas{width:1218px;flex:none;height:805px;background:#000;position:relative;overflow:hidden}
.cad{display:block}
.gr{fill:#6d6d6d}
.blk{fill:#000}
.hx{fill:none;stroke:#0e8a0e;stroke-width:1}
.rd1{stroke:#c20000;stroke-width:1;fill:none}
.rd2{stroke:#7a0000;stroke-width:1;fill:none}
.gn1{stroke:#066806;stroke-width:1;fill:none}
.gn2{stroke:#006400;stroke-width:2;fill:none}
.gn3{stroke:#006400;stroke-width:1;fill:none}
.rl{stroke:#c80000;stroke-width:2;fill:none}
.rt{stroke:#e00000;stroke-width:1;fill:none}
.gb{stroke:#1fbf1f;stroke-width:1;fill:none}
.gt2{stroke:#22dd22;stroke-width:2;fill:none}
.bt1{stroke:#2f3fe8;stroke-width:1.500;fill:none}
.bt2{stroke:#2f3fe8;stroke-width:3.500;fill:none}
.wt{stroke:#f0f0f0;stroke-width:2.500;fill:none}
.pur{fill:#a010c8}
.ycr{stroke:#ffe800;stroke-width:2.500;fill:none}
.ct1 text{font:17px "Liberation Sans",sans-serif;fill:#f4f4f4;text-anchor:middle}
.ax-g{stroke:#0f0;stroke-width:3}
.ax-gf{fill:#0f0}
.ax-r{stroke:#f00;stroke-width:3}
.ax-rf{fill:#f00}
.ax-b{fill:#00a}
.ygt{font:16px "Liberation Sans",sans-serif;fill:#0d0;text-anchor:middle}
.coll{position:absolute;width:16px;height:78px;top:361px;background:#555;color:#aaa;font-size:16px;display:flex;align-items:center;justify-content:center}
.coll.left{left:0;clip-path:polygon(0 0,100% 12%,100% 88%,0 100%)}
.coll.right{right:0;clip-path:polygon(100% 0,0 12%,0 88%,100% 100%)}
.tstrip{position:absolute;right:0;top:1px;width:32px;height:245px;background:#fff;border-radius:0 0 4px 4px;display:flex;flex-direction:column;align-items:center;padding-top:12px;gap:7px}
.tic{width:22px;height:22px;fill:none;stroke:var(--ink);stroke-width:1.200;flex:none}
.tstrip .dd{margin:0}
.hsep{width:22px;height:1px;background:#999;flex:none;margin:-1px 0}

/* dialog */
.dialog{position:absolute;left:63px;top:97px;width:961px;height:541px;background:#dcdcde;display:flex;flex-direction:column;box-shadow:0 0 2px #777}
.dtitle{height:29px;background:#fff;display:flex;align-items:center;padding:0 11px;font-size:14px;color:#333;position:relative;border-bottom:1px solid #c8c8c8;flex:none}
.dmax{position:absolute;left:910px;top:10px;width:10px;height:10px;border:1px solid #666}
.dclose{position:absolute;left:936px;top:0;font:21px/27px "Liberation Sans",sans-serif;color:#888}
.dbar{height:28px;background:#fff;display:flex;align-items:center;gap:8px;padding-left:5px;border-bottom:2px solid #c8c8c8;flex:none;white-space:nowrap;font-size:12px}
.dots{width:3px;height:14px;flex:none;background:radial-gradient(circle,#111 1px,transparent 1.200px) 0 0/3px 4px}
.dt{display:inline-flex;align-items:center;gap:5px;flex:none}
.ds{width:15px;height:15px;flex:none;fill:none;stroke:var(--ink);stroke-width:1.200}
.dsep{width:1px;height:18px;background:#d8d8d8;flex:none}
.m4{margin-left:4px}
.m2{margin-left:2px}
.hl{background:#d6e8fa;border-radius:3px;height:22px;padding:0 6px 0 3px;margin:0 -5px;gap:5px}
.hl .dd{margin-left:4px}
.dbar2{padding-left:0;height:27px;gap:0}
.dleft{width:568px;height:100%;display:flex;align-items:center;gap:9px;padding-left:4px;border-right:2px solid #c8c8c8;flex:none}
.dright{display:flex;align-items:center;gap:8px;padding-left:3px}
.dright .dd{margin-left:2px}
.last{margin-left:auto;padding-right:8px}
.dwork{flex:1;display:flex;min-height:0}
.dtools{width:44px;flex:none;background:#fff;display:flex;flex-direction:column;align-items:flex-start;padding:8px 0 0 8px}
.dotline{width:26px;border-top:2px dotted #222;margin:0 0 4px 1px}
.ds2{width:19px;height:27px;fill:none;stroke:var(--ink);stroke-width:1.100;flex:none}
.ds3{width:19px;height:19px;fill:none;stroke:var(--ink);stroke-width:1.100;flex:none}
.dact{width:27px;height:22px;background:#c0d8f0;border-radius:3px;display:flex;align-items:center;justify-content:center;margin:2.500px 0 2.500px -4px;--ink:#3a7fd0}
.darc{display:flex;align-items:center;--ink:#3a7fd0}
.dcanvas{display:block;background:#000}
.dg1{stroke:#5c2a2e;stroke-width:1;fill:none}
.dg2{stroke:#007000;stroke-width:1;fill:none}
.dg3{stroke:#0c9a0c;stroke-width:1;fill:none}
.dn text{font:15px "Liberation Sans",sans-serif;fill:#fff;text-anchor:middle}
.xr{stroke:#f01010;stroke-width:2.200;fill:none}
.ag{stroke:#0f0;stroke-width:3}
.agf{fill:#0f0}
.ar{stroke:#f00;stroke-width:3}
.arf{fill:#f00}
.ab{fill:#00a}
.yl{font:13px "Liberation Sans",sans-serif;fill:#0d0;text-anchor:middle}
.xl{font:13px "Liberation Sans",sans-serif;fill:#e00;text-anchor:middle}
.dstatus{height:42px;flex:none;position:relative;display:flex;align-items:center;padding-left:2px;gap:6px;white-space:nowrap}
.xy{width:153px;flex:none}
.zero{width:57px;flex:none}
.sb{width:25px;height:25px;border:1px solid #4a90e2;border-radius:4px;background:#d6e8fb;display:flex;align-items:center;justify-content:center;flex:none}
.sb.wd{width:36px;gap:3px}
.sb.nb{background:#fff;border-color:#aaa;width:24px}
.hint{width:282px;flex:none}
.btn{width:80px;height:26px;border-radius:3px;background:#fff;border:1px solid #d8d8d8;text-align:center;line-height:24px;flex:none}
.btn.pri{background:#2f80e4;border-color:#2f80e4;color:#fff}
.rsz{position:absolute;right:3px;bottom:1px;width:8px;height:8px;background:radial-gradient(circle,#777 .8px,transparent 1px) 0 0/3px 3px}
.tooltip{position:absolute;left:378px;top:63px;width:112px;height:31px;background:#fff;border:1px solid #ccc;border-radius:3px;line-height:29px;padding-left:7px;font-size:12px;box-shadow:1px 1px 2px rgba(0,0,0,.2);white-space:nowrap}

/* right panel */
.rpanel{margin-left:4px;width:278px;flex:none;background:#fff;border-left:1px solid #ccc;position:relative;padding-top:1px}
.rh{position:relative;padding-left:25px;padding-right:8px}
.rh .grip{left:7px;top:8px}
.rtabs{display:flex;gap:4px;height:23px;margin:2px 0 4px 3px;align-items:flex-end}
.rt-a{width:61px;height:23px;border:1px solid #ccc;border-bottom:0;border-radius:3px 3px 0 0;text-align:center;line-height:22px;color:#2f80e4;white-space:nowrap}
.rt-b{width:59px;height:21px;background:#e2e2e2;border-radius:3px 3px 0 0;text-align:center;line-height:21px;white-space:nowrap}
.rtable{margin-left:3px;width:272px;border:1px solid #ddd;position:relative;height:714px;overflow:hidden}
.tr{display:grid;grid-template-columns:133px 63px 63px;height:21px;width:259px;border-bottom:1px solid #ddd;position:relative}
.tr>span{border-right:1px solid #ddd}
.th{text-align:center;line-height:20px;height:20px}
.n{display:flex;align-items:center;gap:6px;white-space:nowrap;line-height:20px;position:relative}
.c{display:flex;align-items:center;justify-content:center}
.mn{width:12px;height:12px;border:1px solid #888;border-radius:2px;position:relative;flex:none}
.mn::after{content:"";position:absolute;left:2px;right:2px;top:4px;height:1px;background:#555}
.lv0 .n{padding-left:3px}
.lv1 .n{padding-left:12px}
.lv2 .n{padding-left:41px}
.lv2 .n::before{content:"";position:absolute;left:18px;top:-1px;bottom:0;border-left:1px solid #ccc}
.lv2 .n::after{content:"";position:absolute;left:19px;width:15px;top:10px;border-top:1px solid #ccc}
.lv2.end .n::before{bottom:10px}
.rscroll{position:absolute;right:1px;top:12px;width:4px;height:212px;background:#e8e8e8;border-radius:2px}
.rfoot{display:flex;justify-content:flex-end;padding:8px 7px 0 0}
.rbtn{width:89px;height:24px;border:1px solid #ccc;border-bottom:0;border-radius:3px 3px 0 0;text-align:center;line-height:23px;white-space:nowrap}
.speed{position:absolute;right:0;top:618px;width:39px;height:178px;background:rgba(110,110,110,.62);border-radius:8px 0 0 0;display:flex;flex-direction:column;align-items:center;color:#eee}
.dot{width:14px;height:14px;margin-top:13px;border-radius:50%;background:#0fc166;box-shadow:0 0 0 1px #4a8ac0}
.pill{width:12px;height:32px;margin-top:19px;border-radius:0 0 6px 6px;background:linear-gradient(#ee7f2f,#bcc42c 50%,#35c2a0)}
.sv{font:14px/16px "Liberation Sans",sans-serif;margin-top:20px}
.sv2{margin-top:4px}
.su{display:flex;align-items:center;gap:3px;font:12px/14px "Liberation Sans",sans-serif;color:#c8c8c8;width:34px}
.ar-u{width:9px;height:10px;fill:#11a8ff}
.ar-d{width:9px;height:10px;fill:#10c060}
```
